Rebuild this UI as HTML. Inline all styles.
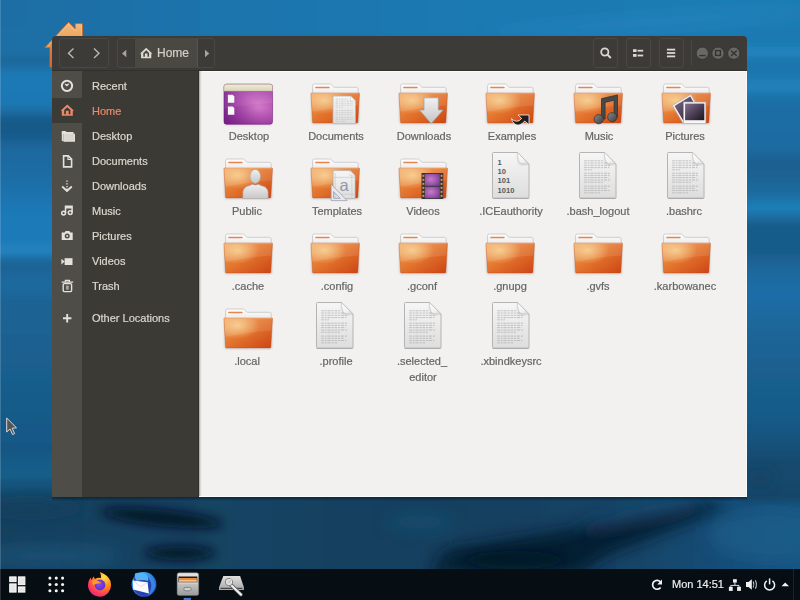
<!DOCTYPE html>
<html><head><meta charset="utf-8">
<style>
html,body{margin:0;padding:0;width:800px;height:600px;overflow:hidden;}
body{position:relative;font-family:"Liberation Sans",sans-serif;background:#1b6596;-webkit-font-smoothing:antialiased;}
.sl,.lbl,.tx{will-change:transform;-webkit-text-stroke:0.2px currentColor;}
.a{position:absolute;}
#bg{position:absolute;left:0;top:0;width:800px;height:570px;
background:linear-gradient(180deg,#1f7ab3 0px,#1e76ad 60px,#1b6a9c 130px,#1f7ab5 230px,#1c6797 320px,#175683 400px,#144a70 470px,#123f60 540px,#10395a 570px);}
#win{left:52px;top:36px;width:695px;height:461px;background:#3c3b37;border-radius:4px 4px 0 0;overflow:hidden;}
.sl{position:absolute;left:92px;font-size:11px;color:#dcd8cf;line-height:14px;white-space:nowrap;}
.lbl{position:absolute;width:100px;text-align:center;font-size:11px;color:#646464;line-height:14px;white-space:nowrap;}
.hb{position:absolute;border:1px solid #4a4843;border-radius:3px;box-sizing:border-box;}
svg{overflow:visible;}
</style></head><body>

<svg width="0" height="0" style="position:absolute">
<defs>
 <linearGradient id="gFront" x1="0" y1="0" x2="1" y2="1">
  <stop offset="0" stop-color="#f2a866"/>
  <stop offset="0.45" stop-color="#e4772f"/>
  <stop offset="1" stop-color="#cc4414"/>
 </linearGradient>
 <radialGradient id="gHi" cx="0.28" cy="0.25" r="0.45">
  <stop offset="0" stop-color="#f8d290" stop-opacity="0.85"/>
  <stop offset="1" stop-color="#f8d290" stop-opacity="0"/>
 </radialGradient>
 <linearGradient id="gPaper" x1="0" y1="0" x2="0" y2="1">
  <stop offset="0" stop-color="#ffffff"/>
  <stop offset="1" stop-color="#e2e2e2"/>
 </linearGradient>
 <linearGradient id="gDoc" x1="0" y1="0" x2="0" y2="1">
  <stop offset="0" stop-color="#f6f6f6"/>
  <stop offset="1" stop-color="#dddddd"/>
 </linearGradient>
 <linearGradient id="gArrow" x1="0" y1="0" x2="0" y2="1">
  <stop offset="0" stop-color="#f2f2f2"/>
  <stop offset="1" stop-color="#c4c4c4"/>
 </linearGradient>
 <linearGradient id="gNote" x1="0" y1="0" x2="1" y2="1">
  <stop offset="0" stop-color="#8a8a8a"/>
  <stop offset="1" stop-color="#3c3c3c"/>
 </linearGradient>
 <linearGradient id="gPhoto" x1="0" y1="0" x2="1" y2="1">
  <stop offset="0" stop-color="#85708f"/>
  <stop offset="0.5" stop-color="#4e4058"/>
  <stop offset="1" stop-color="#18161c"/>
 </linearGradient>
 <linearGradient id="gPerson" x1="0" y1="0" x2="0" y2="1">
  <stop offset="0" stop-color="#eeeeee"/>
  <stop offset="1" stop-color="#c8c8c8"/>
 </linearGradient>
 <radialGradient id="gFilm" cx="0.4" cy="0.45" r="0.7">
  <stop offset="0" stop-color="#c87cc8"/>
  <stop offset="1" stop-color="#7a3c98"/>
 </radialGradient>
 <radialGradient id="gPurple" cx="0.7" cy="0.58" r="0.75">
  <stop offset="0" stop-color="#d67cca"/>
  <stop offset="0.55" stop-color="#b04cb0"/>
  <stop offset="1" stop-color="#882c96"/>
 </radialGradient>
 <linearGradient id="gCream" x1="0" y1="0" x2="0" y2="1">
  <stop offset="0" stop-color="#f0ecd8"/>
  <stop offset="1" stop-color="#d8d4b8"/>
 </linearGradient>
 <linearGradient id="gCurl" x1="0" y1="0" x2="1" y2="1"><stop offset="0" stop-color="#ffffff"/><stop offset="0.6" stop-color="#f2f2f2"/><stop offset="1" stop-color="#d4d4d4"/></linearGradient>
 <linearGradient id="gPurpDark" x1="0" y1="1" x2="0.6" y2="0.3"><stop offset="0" stop-color="#5a1070" stop-opacity="0.45"/><stop offset="1" stop-color="#5a1070" stop-opacity="0"/></linearGradient>
 <filter id="fSh" x="-20%" y="-20%" width="140%" height="140%"><feGaussianBlur stdDeviation="0.8"/></filter>

 <g id="fold">
  <rect x="0.5" y="10" width="47.5" height="30" rx="2" fill="#000" opacity="0.18" filter="url(#fSh)"/>
  <path d="M1.6,14 V1.8 Q1.6,0 3.4,0 H19.5 L23.2,3.3 H45.4 Q47.2,3.3 47.2,5.1 V14 Z" fill="url(#gPaper)" stroke="#cdcdcd" stroke-width="1"/>
  <rect x="4.1" y="2.7" width="14.6" height="1.6" rx="0.8" fill="#e9844c"/>
  <path d="M0.4,9 H48.1 Q48.6,9 48.5,9.6 L46.8,38.3 Q46.8,38.9 46.2,38.9 H2.2 Q1.6,38.9 1.6,38.3 L-0.1,9.6 Q-0.1,9 0.4,9 Z" fill="url(#gFront)"/>
  <path d="M0.4,9 H48.1 Q48.6,9 48.5,9.6 L46.8,38.3 Q46.8,38.9 46.2,38.9 H2.2 Q1.6,38.9 1.6,38.3 L-0.1,9.6 Q-0.1,9 0.4,9 Z" fill="url(#gHi)"/>
  <path d="M0,9 H48.5 L47.7,21.5 Q24,23 0.8,28 Z" fill="#fff" opacity="0.10"/>
  <path d="M0.4,9 H48.1 Q48.6,9 48.5,9.6 L46.8,38.3 Q46.8,38.9 46.2,38.9 H2.2 Q1.6,38.9 1.6,38.3 L-0.1,9.6 Q-0.1,9 0.4,9 Z" fill="none" stroke="#c24a12" stroke-width="0.6" opacity="0.6"/>
  <path d="M0.6,9.6 H47.9" stroke="#f7b47c" stroke-width="0.8" opacity="0.7"/>
 </g>

 <g id="txtdoc">
  <path d="M0.5,1.5 Q0.5,0.5 1.5,0.5 H25.5 L37,12 V45.5 Q37,46.5 36,46.5 H1.5 Q0.5,46.5 0.5,45.5 Z" fill="url(#gDoc)" stroke="#b4b4b4" stroke-width="1"/>
  <path d="M25.5,0.5 Q25,10 27.5,12.5 Q30,14 37,12 Z" fill="#000" opacity="0.12" filter="url(#fSh)"/><path d="M25.5,0.5 Q25.8,9 27.8,10.8 Q30,12.4 37,12 Z" fill="url(#gCurl)" stroke="#c0c0c0" stroke-width="0.6"/>
  <path d="M1,46.2 H36.5" stroke="#a8a8a8" stroke-width="1"/>
 </g>
 <g id="txtlines" stroke="#b0b0b0" stroke-width="0.75" stroke-dasharray="2.6 0.9 1.8 0.9 3.2 0.9 2.2 0.9">
  <path d="M5.2,8.8 H25 M5.2,11 H29 M5.2,13.3 H31 M5.2,15.6 H30.5 M5.2,17.8 H13"/>
  <path d="M5.2,21.2 H31 M5.2,23.4 H30.5 M5.2,25.6 H29.5 M5.2,28 H31 M5.2,30.2 H24"/>
  <path d="M5.2,34.1 H31 M5.2,36.3 H27.5 M5.2,38.5 H30.5 M5.2,40.8 H21.5"/>
 </g>
</defs>
</svg>

<svg class="a" style="left:0;top:0" width="800" height="569" viewBox="0 0 800 569">
<defs>
<linearGradient id="gL" x1="0" y1="0" x2="0" y2="569" gradientUnits="userSpaceOnUse"><stop offset="0.0000" stop-color="#1e72a8"/><stop offset="0.0527" stop-color="#1e70a6"/><stop offset="0.0914" stop-color="#1e70a6"/><stop offset="0.1054" stop-color="#1b6699"/><stop offset="0.1318" stop-color="#1f7ab6"/><stop offset="0.1845" stop-color="#1f78b3"/><stop offset="0.2109" stop-color="#185a8a"/><stop offset="0.2355" stop-color="#185a8a"/><stop offset="0.2636" stop-color="#1c6aa0"/><stop offset="0.3163" stop-color="#1c6ea6"/><stop offset="0.3779" stop-color="#1f7ab8"/><stop offset="0.4218" stop-color="#1f7ab8"/><stop offset="0.4429" stop-color="#2284c0"/><stop offset="0.4605" stop-color="#1a6294"/><stop offset="0.5009" stop-color="#1c6aa0"/><stop offset="0.5272" stop-color="#1b6495"/><stop offset="0.6327" stop-color="#1a6090"/><stop offset="0.7381" stop-color="#185a88"/><stop offset="0.7909" stop-color="#175785"/><stop offset="0.8348" stop-color="#1a5f8a"/><stop offset="0.8787" stop-color="#134668"/><stop offset="0.9139" stop-color="#154b70"/><stop offset="0.9578" stop-color="#175580"/><stop offset="1.0000" stop-color="#185a85"/></linearGradient>
<linearGradient id="gR" x1="0" y1="0" x2="0" y2="569" gradientUnits="userSpaceOnUse"><stop offset="0.0000" stop-color="#1f7ab2"/><stop offset="0.0527" stop-color="#1f7ab3"/><stop offset="0.0808" stop-color="#1f7ab3"/><stop offset="0.0914" stop-color="#2588c4"/><stop offset="0.1019" stop-color="#1f78b0"/><stop offset="0.1230" stop-color="#1d74ab"/><stop offset="0.1547" stop-color="#2282bd"/><stop offset="0.1757" stop-color="#1c6ea6"/><stop offset="0.2583" stop-color="#1c6ca2"/><stop offset="0.2847" stop-color="#1a5f90"/><stop offset="0.3128" stop-color="#1b6495"/><stop offset="0.3374" stop-color="#1c6a9c"/><stop offset="0.3656" stop-color="#2080bb"/><stop offset="0.3954" stop-color="#195c8a"/><stop offset="0.4394" stop-color="#195c8a"/><stop offset="0.4833" stop-color="#1c6aa0"/><stop offset="0.5185" stop-color="#1d6ea8"/><stop offset="0.5800" stop-color="#1b6699"/><stop offset="0.6503" stop-color="#1a6090"/><stop offset="0.7381" stop-color="#185a88"/><stop offset="0.8172" stop-color="#15496e"/><stop offset="0.8787" stop-color="#14466a"/><stop offset="0.9578" stop-color="#175a88"/><stop offset="1.0000" stop-color="#175680"/></linearGradient>
<linearGradient id="gTop" x1="0" y1="0" x2="1" y2="0"><stop offset="0" stop-color="#1c6ca2"/><stop offset="0.3" stop-color="#1e74ac"/><stop offset="0.6" stop-color="#1f7ab3"/><stop offset="1" stop-color="#1f7cb5"/></linearGradient>
<linearGradient id="gBot" x1="0" y1="0" x2="1" y2="0"><stop offset="0" stop-color="#123f5e"/><stop offset="0.3" stop-color="#134464"/><stop offset="0.55" stop-color="#123f5e"/><stop offset="0.75" stop-color="#134466"/><stop offset="0.9" stop-color="#165280"/><stop offset="1" stop-color="#185a88"/></linearGradient>
<filter id="bb5" x="-10%" y="-10%" width="120%" height="120%"><feGaussianBlur stdDeviation="3"/></filter><filter id="bb6" x="-50%" y="-50%" width="200%" height="200%"><feGaussianBlur stdDeviation="6"/></filter>
<filter id="bb8" x="-50%" y="-50%" width="200%" height="200%"><feGaussianBlur stdDeviation="8"/></filter>
</defs>
<g filter="url(#bb5)">
<rect x="-60" y="-60" width="920" height="700" fill="url(#gBot)"/>
<rect x="-60" y="-60" width="920" height="100" fill="url(#gTop)"/>
<rect x="-60" y="28" width="118" height="475" fill="url(#gL)"/>
<rect x="741" y="28" width="120" height="475" fill="url(#gR)"/>
</g>
<g filter="url(#bb8)">
<ellipse cx="650" cy="22" rx="160" ry="6" fill="#2a8cc6" opacity="0.5" transform="rotate(-4 650 22)"/>
<ellipse cx="30" cy="508" rx="55" ry="12" fill="#113e5e" opacity="0.7"/>
<ellipse cx="50" cy="556" rx="70" ry="10" fill="#1a5a82" opacity="0.6"/>
<ellipse cx="770" cy="535" rx="60" ry="25" fill="#1a5f8c" opacity="0.6"/>
<ellipse cx="420" cy="522" rx="35" ry="7" fill="#1a5a80" opacity="0.5"/>
<ellipse cx="640" cy="520" rx="70" ry="9" fill="#1c6294" opacity="0.55" transform="rotate(-12 640 520)"/>
<path d="M430,575 L445,550 Q530,536 610,522 L705,503 L732,506 Q665,532 605,556 L580,575 Z" fill="#06182a" opacity="0.85"/>
</g>
<g filter="url(#bb6)">
<ellipse cx="162" cy="518" rx="62" ry="8" fill="#04121c" opacity="0.9" transform="rotate(6 162 518)"/>
<ellipse cx="180" cy="553" rx="36" ry="7" fill="#04121c" opacity="0.9"/>
<ellipse cx="515" cy="560" rx="50" ry="9" fill="#04121c" opacity="0.6"/>
<ellipse cx="760" cy="478" rx="12" ry="8" fill="#123f60" opacity="0.6"/>
</g>
</svg>
<div class="a" style="left:0;top:0;width:1px;height:569px;background:rgba(190,215,235,0.22)"></div>

<svg class="a" style="left:0;top:0" width="100" height="80" viewBox="0 0 100 80">
<defs><linearGradient id="gHouse" x1="0" y1="0" x2="0" y2="1"><stop offset="0" stop-color="#f2bc7c"/><stop offset="0.4" stop-color="#e9a05a"/><stop offset="1" stop-color="#d8602a"/></linearGradient></defs><path d="M45,47.5 L68.6,22.3 L75.2,28.9 V23.8 H82.4 V40 H52 V67 H50 V47.5 Z" fill="url(#gHouse)" stroke="#d46a2a" stroke-width="0.9"/><path d="M47.5,46.6 L68.6,24 L75.8,31 M76.2,24.8 H81.5 V38" fill="none" stroke="#f8d4a4" stroke-width="0.7" opacity="0.7"/>
</svg>
<svg class="a" style="left:0;top:0" width="30" height="440" viewBox="0 0 30 440">
<path d="M6.7,418 V432 L10,429 L12.6,434.6 L14.6,433.6 L12.2,428.2 L16.5,427.8 Z" fill="#555" stroke="#d8d8d8" stroke-width="1" stroke-linejoin="round"/>
</svg>
<div id="win" class="a"></div>
<div class="a" style="left:52px;top:70px;width:695px;height:1px;background:#31302c"></div>
<div class="a" style="left:52px;top:71px;width:147px;height:426px;background:#3c3a35"></div>
<div class="a" style="left:52px;top:71px;width:30px;height:426px;background:#4e4d47"></div>
<div class="a" style="left:52px;top:98px;width:30px;height:25px;background:#3c3a35"></div>
<div class="a" style="left:199px;top:71px;width:548px;height:426px;background:#f2f1f0"></div>
<div class="a" style="left:199px;top:71px;width:548px;height:1px;background:#fafaf9"></div>
<div class="a" style="left:198px;top:71px;width:1px;height:426px;background:#302f2b"></div>
<div class="a" style="left:199px;top:71px;width:3px;height:426px;background:linear-gradient(90deg,#a2a1a0,#e4e3e2 60%,#f2f1f0)"></div>
<div class="a" style="left:199px;top:496px;width:548px;height:1px;background:#fcfcfb"></div>
<div class="a" style="left:746px;top:71px;width:1px;height:426px;background:#f9f9f8"></div>
<div class="a" style="left:52px;top:497px;width:695px;height:4px;background:linear-gradient(180deg,rgba(2,8,14,0.45),rgba(2,8,14,0))"></div>

<div class="hb" style="left:59px;top:38px;width:50px;height:30px"></div>
<div class="hb" style="left:117px;top:38px;width:98px;height:30px"></div>
<div class="a" style="left:134px;top:39px;width:64px;height:28px;background:#4a4843;border-left:1px solid #3a3934;border-right:1px solid #55534d;box-sizing:border-box"></div>
<div class="hb" style="left:593px;top:38px;width:25px;height:30px"></div>
<div class="hb" style="left:626px;top:38px;width:25px;height:30px"></div>
<div class="hb" style="left:659px;top:38px;width:25px;height:30px"></div>
<div class="a" style="left:691px;top:40px;width:1px;height:26px;background:#4a4843"></div>
<div class="a tx" style="left:157px;top:46px;font-size:12px;line-height:14px;color:#d4d0c8">Home</div>
<svg class="a" style="left:0;top:0" width="800" height="80" viewBox="0 0 800 80">
<g fill="none" stroke="#bcb8b0" stroke-width="1.4">
<path d="M73.5,48.5 L68.5,53.3 L73.5,58.1"/>
<path d="M94,48.5 L99,53.3 L94,58.1"/>
</g>
<path d="M126.3,49.8 L122,53.5 L126.3,57.3 Z" fill="#a8a49c"/>
<path d="M205,49.8 L209.3,53.5 L205,57.3 Z" fill="#a8a49c"/>
<g transform="translate(139.4,47.3) scale(0.93)"><path d="M0.8,6.6 L7.3,0.6 L13.8,6.6 L12.8,7 V11.8 H1.8 V7 Z M4.2,10.2 V6.1 L7.3,3.3 L10.4,6.1 V10.2 H8.7 V6.8 H5.9 V10.2 Z" fill-rule="evenodd" fill="#dcd8cf"/></g>
<g fill="none" stroke="#dcd8cf"><circle cx="604.8" cy="52" r="3.6" stroke-width="1.8"/><path d="M607.4,54.6 L610.8,58" stroke-width="2"/></g>
<g fill="#dcd8cf"><rect x="633" y="49.2" width="3.6" height="2.8"/><rect x="637.6" y="49.8" width="5.6" height="1.8"/><rect x="633" y="54" width="3.6" height="2.8"/><rect x="637.6" y="54.6" width="5.6" height="1.8"/>
<rect x="666.9" y="48.7" width="8.3" height="1.8"/><rect x="666.9" y="52.1" width="8.3" height="1.8"/><rect x="666.9" y="55.5" width="8.3" height="1.8"/></g>
<g fill="#6a6864" stroke="#33322e" stroke-width="0.8"><circle cx="702.3" cy="53.2" r="6.1"/><circle cx="718" cy="53.2" r="6.1"/><circle cx="733.8" cy="53.2" r="6.1"/></g>
<rect x="699.3" y="54.9" width="6.3" height="1.4" fill="#33322e"/>
<rect x="715.6" y="50.6" width="4.8" height="4.8" fill="none" stroke="#33322e" stroke-width="1.4"/>
<path d="M731,50.6 L736.8,55.9 M736.8,50.6 L731,55.9" stroke="#33322e" stroke-width="1.3"/>
</svg>
<div class="sl" style="top:78.5px;color:#dcd8cf">Recent</div>
<svg class="a" style="left:60px;top:79px" width="16" height="16" viewBox="0 0 16 16"><circle cx="7" cy="6.85" r="5.15" fill="none" stroke="#e4e1da" stroke-width="2"/><path d="M5.1,4.9 L6.9,6.5 L8.6,4.8" fill="none" stroke="#e4e1da" stroke-width="1.3"/></svg>
<div class="sl" style="top:103.5px;color:#e9896a">Home</div>
<svg class="a" style="left:60px;top:104px" width="16" height="16" viewBox="0 0 16 16"><path d="M0.8,6.6 L7.3,0.6 L13.8,6.6 L12.8,7 V11.8 H1.8 V7 Z M4.2,10.2 V6.1 L7.3,3.3 L10.4,6.1 V10.2 H8.7 V6.8 H5.9 V10.2 Z" fill-rule="evenodd" fill="#e9896a"/></svg>
<div class="sl" style="top:128.5px;color:#dcd8cf">Desktop</div>
<svg class="a" style="left:60.6px;top:129px" width="16" height="16" viewBox="0 0 16 16"><path d="M0.8,2 H4.5 L5.5,3 H12.5 V5 H0.8 Z" fill="#e4e1da"/><rect x="0.8" y="3" width="1.6" height="9" fill="#e4e1da"/><rect x="2.9" y="5.2" width="10.6" height="7" fill="#d9d6cf" stroke="#e4e1da" stroke-width="1"/></svg>
<div class="sl" style="top:153.5px;color:#dcd8cf">Documents</div>
<svg class="a" style="left:61.8px;top:155.2px" width="16" height="16" viewBox="0 0 16 16"><path d="M1.6,0.9 H6.3 L9.6,4.2 V11.9 H1.6 Z" fill="none" stroke="#e4e1da" stroke-width="1.6" stroke-linejoin="miter"/><path d="M6,1 V4.5 H9.5" fill="none" stroke="#e4e1da" stroke-width="1.2"/></svg>
<div class="sl" style="top:178.5px;color:#dcd8cf">Downloads</div>
<svg class="a" style="left:60px;top:180px" width="16" height="16" viewBox="0 0 16 16"><path d="M7,0.5 V1.8 M7,3.2 V4.5 M7,5.9 V7.2 M7,8.6 V10.8" stroke="#e4e1da" stroke-width="1.4"/><path d="M2.2,6.5 L7,11 L11.8,6.5" fill="none" stroke="#e4e1da" stroke-width="1.8"/></svg>
<div class="sl" style="top:203.5px;color:#dcd8cf">Music</div>
<svg class="a" style="left:60.5px;top:204.8px" width="16" height="16" viewBox="0 0 16 16"><circle cx="2.6" cy="8.1" r="1.9" fill="none" stroke="#e4e1da" stroke-width="1.5"/><circle cx="9.2" cy="7.6" r="1.9" fill="none" stroke="#e4e1da" stroke-width="1.5"/><path d="M4.5,8.1 V1.3 H11.1 V7.6 M4.5,2.8 H11.1" fill="none" stroke="#e4e1da" stroke-width="1.5"/></svg>
<div class="sl" style="top:228.5px;color:#dcd8cf">Pictures</div>
<svg class="a" style="left:61px;top:230px" width="16" height="16" viewBox="0 0 16 16"><path d="M0.7,2.5 H3.6 L4.6,0.9 H8.4 L9.4,2.5 H11.7 V9.9 H0.7 Z" fill="#e4e1da"/><circle cx="6.2" cy="5.9" r="2.5" fill="#4f4d46"/><circle cx="6.2" cy="5.9" r="1" fill="#e4e1da"/></svg>
<div class="sl" style="top:253.5px;color:#dcd8cf">Videos</div>
<svg class="a" style="left:61.4px;top:258.1px" width="16" height="16" viewBox="0 0 16 16"><path d="M0.4,0.8 L3.6,3.6 L0.4,6.4 Z" fill="#e4e1da"/><rect x="3.6" y="0.2" width="7.9" height="6.8" fill="#e4e1da"/></svg>
<div class="sl" style="top:278.5px;color:#dcd8cf">Trash</div>
<svg class="a" style="left:60.5px;top:279px" width="16" height="16" viewBox="0 0 16 16"><path d="M0.6,3.2 H12.2 M4.4,3 V1.3 H8.4 V3" fill="none" stroke="#e4e1da" stroke-width="1.3"/><rect x="2.2" y="4.6" width="8.4" height="8" rx="1" fill="none" stroke="#e4e1da" stroke-width="1.4"/><rect x="5" y="6.6" width="2.8" height="4" fill="#a8a49c"/></svg>
<div class="sl" style="top:310.5px;color:#dcd8cf">Other Locations</div>
<svg class="a" style="left:62.6px;top:313.8px" width="16" height="16" viewBox="0 0 16 16"><path d="M4.2,0 V8.5 M0,4.25 H8.4" stroke="#e4e1da" stroke-width="1.9"/></svg>
<svg class="a" style="left:223.5px;top:84px" width="50" height="44" viewBox="0 0 50 44">
<rect x="0.5" y="2" width="47.5" height="39" rx="2" fill="#000" opacity="0.15" filter="url(#fSh)"/>
<rect x="0" y="0.2" width="48.5" height="40" rx="2.5" fill="url(#gPurple)" stroke="#7a2486" stroke-width="0.6"/>
<path d="M2.5,0.2 H46 Q48.5,0.2 48.5,2.7 V7.2 H0 V2.7 Q0,0.2 2.5,0.2 Z" fill="url(#gCream)" stroke="#aca88c" stroke-width="0.5"/>
<path d="M0.3,7.4 H48.5 V19 Q24,20 0.3,25 Z" fill="#fff" opacity="0.08"/><rect x="0" y="7.2" width="48.5" height="33" rx="2" fill="url(#gPurpDark)"/><path d="M0.3,7.4 H48.2" stroke="#6a5a50" stroke-width="0.6" opacity="0.6"/>
<path d="M3.9,10.8 H8.6 L10.3,12.5 V18.8 H3.9 Z" fill="#f8f8f8"/>
<path d="M3.9,22.4 H8.6 L10.3,24.1 V30.8 H3.9 Z" fill="#f8f8f8"/>
</svg>
<div class="lbl" style="left:198.7px;top:128.5px">Desktop</div>
<svg class="a" style="left:311.1px;top:84px" width="50" height="44" viewBox="0 0 50 44"><use href="#fold"/><path d="M22,12 H39.5 L44.5,17 V39.7 H22 Z" fill="url(#gDoc)" stroke="#b4b4b4" stroke-width="0.8"/>
<path d="M39.5,12 V17 H44.5 Z" fill="#fff" stroke="#c8c8c8" stroke-width="0.6"/>
<g stroke="#bcbcbc" stroke-width="0.55" stroke-dasharray="2.5 0.8 1.5 0.8"><path d="M24.5,15.2 H37 M24.5,17.2 H41.5 M24.5,19.2 H42 M24.5,21.2 H42 M24.5,23.2 H32 M24.5,26.4 H42 M24.5,28.4 H42 M24.5,30.4 H41 M24.5,33.4 H42 M24.5,35.4 H42 M24.5,37.4 H36"/></g></svg>
<div class="lbl" style="left:285.9px;top:128.5px">Documents</div>
<svg class="a" style="left:398.7px;top:84px" width="50" height="44" viewBox="0 0 50 44"><use href="#fold"/><path d="M25,13.8 H39.3 V26 H44.1 L32.2,39.6 L20.5,26 H25 Z" fill="url(#gArrow)" stroke="#a4a4a4" stroke-width="0.8"/></svg>
<div class="lbl" style="left:373.5px;top:128.5px">Downloads</div>
<svg class="a" style="left:486.3px;top:84px" width="50" height="44" viewBox="0 0 50 44"><use href="#fold"/><path d="M25.4,34.6 Q27.5,41.8 33,41 Q36.2,40.4 38.6,37.1 L43,40.6 V31 H32 L35.7,34.4 Q33.5,37.2 30.8,37.3 Q27.8,37.2 25.4,34.6 Z" fill="#1e1e1e" stroke="#f8f8f8" stroke-width="0.8" stroke-linejoin="round"/></svg>
<div class="lbl" style="left:461.5px;top:128.5px">Examples</div>
<svg class="a" style="left:573.9px;top:84px" width="50" height="44" viewBox="0 0 50 44"><use href="#fold"/><path d="M27.5,14.6 L43.5,11 V33 H40.1 V16.2 L31.1,18.4 V35 H27.5 Z" fill="#484848" stroke="#2e2e2e" stroke-width="0.7" stroke-linejoin="round"/>
<circle cx="24.7" cy="35.2" r="4.6" fill="url(#gNote)" stroke="#2e2e2e" stroke-width="0.7"/>
<circle cx="38.3" cy="33.2" r="4.6" fill="url(#gNote)" stroke="#2e2e2e" stroke-width="0.7"/></svg>
<div class="lbl" style="left:548.7px;top:128.5px">Music</div>
<svg class="a" style="left:661.5px;top:84px" width="50" height="44" viewBox="0 0 50 44"><use href="#fold"/><polygon points="28.7,10.4 10.3,21.4 21.3,39.8 39.7,28.8" fill="#f4f4f4" stroke="#a8a8a8" stroke-width="0.6"/>
<polygon points="28.2,12.6 12.6,21.9 21.8,37.6 37.4,28.3" fill="url(#gPhoto)"/>
<rect x="21.5" y="18" width="22.4" height="21.6" fill="#f6f6f6" stroke="#a8a8a8" stroke-width="0.6"/>
<rect x="23.1" y="19.6" width="19.2" height="16.6" fill="url(#gPhoto)"/></svg>
<div class="lbl" style="left:635.0px;top:128.5px">Pictures</div>
<svg class="a" style="left:223.5px;top:159px" width="50" height="44" viewBox="0 0 50 44"><use href="#fold"/><path d="M18.9,39.6 V33 Q19.5,28 25,26.8 L28.5,25.2 Q31.3,27 34.1,25.2 L37.6,26.8 Q43.5,28 44.1,33 V39.6 Z" fill="url(#gPerson)" stroke="#a8a8a8" stroke-width="0.6"/>
<ellipse cx="31.3" cy="17.4" rx="5.2" ry="7" fill="url(#gPerson)" stroke="#a8a8a8" stroke-width="0.6"/></svg>
<div class="lbl" style="left:196.8px;top:203.5px">Public</div>
<svg class="a" style="left:311.1px;top:159px" width="50" height="44" viewBox="0 0 50 44"><use href="#fold"/><path d="M22.1,11.6 H39 L44.1,16.7 V39.6 H22.1 Z" fill="url(#gDoc)" stroke="#b0b0b0" stroke-width="0.7"/>
<path d="M39,11.6 V16.7 H44.1 Z" fill="#fff" stroke="#c0c0c0" stroke-width="0.5"/>
<path d="M22.5,18.4 H43.5 M22.5,35.2 H43.5 M24.1,14 V39 M40.9,14 V39" stroke="#c0c4cc" stroke-width="0.6"/>
<text x="33.2" y="32" font-size="16.5" text-anchor="middle" fill="#9098a8" font-family="Liberation Sans">a</text>
<path d="M20.1,25.2 V41.6 H36.1 Z M22.6,32.6 V39.3 H29.3 Z" fill="#e8e8ee" fill-rule="evenodd" stroke="#9098a8" stroke-width="0.7" stroke-linejoin="round"/></svg>
<div class="lbl" style="left:286.7px;top:203.5px">Templates</div>
<svg class="a" style="left:398.7px;top:159px" width="50" height="44" viewBox="0 0 50 44"><use href="#fold"/><rect x="22.5" y="14" width="21.8" height="26" fill="#383838"/>
<rect x="26" y="15" width="14.8" height="11.8" fill="url(#gFilm)"/>
<rect x="26" y="27.8" width="14.8" height="11.4" fill="url(#gFilm)"/>
<g fill="#f08848"><rect x="23.4" y="15.9" width="1.9" height="1.9"/><rect x="41.6" y="15.9" width="1.9" height="1.9"/><rect x="23.4" y="19.9" width="1.9" height="1.9"/><rect x="41.6" y="19.9" width="1.9" height="1.9"/><rect x="23.4" y="23.9" width="1.9" height="1.9"/><rect x="41.6" y="23.9" width="1.9" height="1.9"/><rect x="23.4" y="27.9" width="1.9" height="1.9"/><rect x="41.6" y="27.9" width="1.9" height="1.9"/><rect x="23.4" y="31.9" width="1.9" height="1.9"/><rect x="41.6" y="31.9" width="1.9" height="1.9"/><rect x="23.4" y="35.9" width="1.9" height="1.9"/><rect x="41.6" y="35.9" width="1.9" height="1.9"/></g></svg>
<div class="lbl" style="left:373.3px;top:203.5px">Videos</div>
<svg class="a" style="left:491.5px;top:152px" width="40" height="48" viewBox="0 0 40 48"><use href="#txtdoc"/><g font-family="Liberation Sans" font-weight="bold" font-size="7.6" fill="#5a5a5a"><text x="5.6" y="12.6">1</text><text x="5.6" y="21.8">10</text><text x="5.6" y="31.2">101</text><text x="5.6" y="40.8">1010</text></g></svg>
<div class="lbl" style="left:461.3px;top:203.5px">.ICEauthority</div>
<svg class="a" style="left:579.1px;top:152px" width="40" height="48" viewBox="0 0 40 48"><use href="#txtdoc"/><use href="#txtlines"/></svg>
<div class="lbl" style="left:548.4px;top:203.5px">.bash_logout</div>
<svg class="a" style="left:666.7px;top:152px" width="40" height="48" viewBox="0 0 40 48"><use href="#txtdoc"/><use href="#txtlines"/></svg>
<div class="lbl" style="left:634.2px;top:203.5px">.bashrc</div>
<svg class="a" style="left:223.5px;top:234px" width="50" height="44" viewBox="0 0 50 44"><use href="#fold"/></svg>
<div class="lbl" style="left:198.0px;top:278.5px">.cache</div>
<svg class="a" style="left:311.1px;top:234px" width="50" height="44" viewBox="0 0 50 44"><use href="#fold"/></svg>
<div class="lbl" style="left:286.5px;top:278.5px">.config</div>
<svg class="a" style="left:398.7px;top:234px" width="50" height="44" viewBox="0 0 50 44"><use href="#fold"/></svg>
<div class="lbl" style="left:371.8px;top:278.5px">.gconf</div>
<svg class="a" style="left:486.3px;top:234px" width="50" height="44" viewBox="0 0 50 44"><use href="#fold"/></svg>
<div class="lbl" style="left:460.4px;top:278.5px">.gnupg</div>
<svg class="a" style="left:573.9px;top:234px" width="50" height="44" viewBox="0 0 50 44"><use href="#fold"/></svg>
<div class="lbl" style="left:548.1px;top:278.5px">.gvfs</div>
<svg class="a" style="left:661.5px;top:234px" width="50" height="44" viewBox="0 0 50 44"><use href="#fold"/></svg>
<div class="lbl" style="left:634.6px;top:278.5px">.karbowanec</div>
<svg class="a" style="left:223.5px;top:309px" width="50" height="44" viewBox="0 0 50 44"><use href="#fold"/></svg>
<div class="lbl" style="left:197.0px;top:353.5px">.local</div>
<svg class="a" style="left:316.3px;top:302px" width="40" height="48" viewBox="0 0 40 48"><use href="#txtdoc"/><use href="#txtlines"/></svg>
<div class="lbl" style="left:285.6px;top:353.5px">.profile</div>
<svg class="a" style="left:403.9px;top:302px" width="40" height="48" viewBox="0 0 40 48"><use href="#txtdoc"/><use href="#txtlines"/></svg>
<div class="lbl" style="left:372.4px;top:353.5px">.selected_</div>
<div class="lbl" style="left:372.6px;top:369.5px">editor</div>
<svg class="a" style="left:491.5px;top:302px" width="40" height="48" viewBox="0 0 40 48"><use href="#txtdoc"/><use href="#txtlines"/></svg>
<div class="lbl" style="left:461.3px;top:353.5px">.xbindkeysrc</div>
<div class="a" style="left:0;top:569px;width:800px;height:31px;background:#060d13"></div>
<div class="a" style="left:793px;top:569px;width:1px;height:31px;background:#1c232b"></div><div class="a" style="left:0;top:569px;width:1px;height:31px;background:#2a3036"></div>
<div class="a tx" style="left:672px;top:577px;font-size:11px;line-height:14px;color:#ececec">Mon 14:51</div>
<svg class="a" style="left:0;top:570px" width="800" height="30" viewBox="0 570 800 30">
<g fill="#e6e6e6" stroke="#fafafa" stroke-width="1">
<rect x="9.7" y="576.9" width="6.4" height="4.7" /><rect x="9.7" y="583.9" width="6.4" height="8.2"/>
<rect x="18.4" y="576.9" width="6.5" height="7.7"/><rect x="18.4" y="586.9" width="6.5" height="5.2"/>
</g>
<g fill="#f4f4f4"><circle cx="49.90" cy="578.10" r="1.55"/><circle cx="49.90" cy="584.45" r="1.55"/><circle cx="49.90" cy="590.80" r="1.55"/><circle cx="56.25" cy="578.10" r="1.55"/><circle cx="56.25" cy="584.45" r="1.55"/><circle cx="56.25" cy="590.80" r="1.55"/><circle cx="62.60" cy="578.10" r="1.55"/><circle cx="62.60" cy="584.45" r="1.55"/><circle cx="62.60" cy="590.80" r="1.55"/></g>
<defs>
<radialGradient id="gFF" cx="0.7" cy="0.2" r="0.9"><stop offset="0" stop-color="#ffe14a"/><stop offset="0.45" stop-color="#ff8a1a"/><stop offset="0.8" stop-color="#ff3a5a"/><stop offset="1" stop-color="#e0208a"/></radialGradient>
<radialGradient id="gFFg" cx="0.4" cy="0.4" r="0.7"><stop offset="0" stop-color="#8a4ae8"/><stop offset="1" stop-color="#5a2ad0"/></radialGradient>
<linearGradient id="gTB" x1="0.2" y1="0" x2="0.8" y2="1"><stop offset="0" stop-color="#48b0f8"/><stop offset="0.5" stop-color="#2a78e0"/><stop offset="1" stop-color="#1a3ab8"/></linearGradient>
<linearGradient id="gCab" x1="0" y1="0" x2="0" y2="1"><stop offset="0" stop-color="#e8e8e8"/><stop offset="1" stop-color="#9a9a9a"/></linearGradient>
<linearGradient id="gDisk" x1="0" y1="0" x2="0" y2="1"><stop offset="0" stop-color="#e0e0e0"/><stop offset="1" stop-color="#a8a8a8"/></linearGradient>
</defs>
<path d="M100,572 Q108,575 110.5,581 Q113,590 105,595.5 Q98,598.5 92,594 Q86.5,589 88.5,581.5 L90.5,577.5 L91.5,580 L93.5,576.5 L95,579 Q98,577 101,578 Q101,574.5 100,572 Z" fill="url(#gFF)"/>
<circle cx="100" cy="585" r="5.4" fill="url(#gFFg)"/>
<path d="M91.5,581 Q95,579.5 99,581.5 L101.5,583 Q96,583.5 93,585 Z" fill="#ff9a2a"/>
<circle cx="144" cy="584.4" r="12.4" fill="url(#gTB)"/>
<path d="M134,577 Q140,574 147,577 Q153,581 152,589 Q149,595 141,595 Q135,593 133,588 Z" fill="#2a3aa8" opacity="0.85"/>
<path d="M146,574 Q154,577 155.5,585 Q155,592 148,596 Q152,589 151,583 Q149,577 146,574 Z" fill="#3a8ee8" opacity="0.8"/>
<path d="M135,573.5 Q141,571.5 146,574 Q149,577 148,581 Q142,579 137,581 Q134,578 135,573.5 Z" fill="#50b4f8"/>
<circle cx="138.4" cy="579.3" r="0.9" fill="#e08a30"/>
<path d="M132.8,580.5 L147.6,582.3 L148.9,593.6 L133.2,589.4 Z" fill="#fbfbfd"/>
<path d="M133.5,581 L140.5,586.5 L147.2,582.6" fill="none" stroke="#c8c8d8" stroke-width="0.6"/>
<rect x="177.1" y="572.8" width="21.6" height="22.7" rx="2" fill="url(#gCab)" stroke="#707070" stroke-width="0.5"/>
<rect x="178.5" y="576.5" width="18.8" height="5.8" fill="#2a1a10"/>
<rect x="179" y="578" width="17.8" height="4.2" fill="#e88a3a"/>
<rect x="179" y="580.2" width="17.8" height="1" fill="#ffd0a0"/>
<rect x="178.3" y="582.6" width="19.2" height="0.8" fill="#ffffff" opacity="0.5"/>
<rect x="183.8" y="587.4" width="7.4" height="3.4" rx="1.7" fill="#cfcfcf" stroke="#6a6a6a" stroke-width="0.7"/>
<rect x="183.7" y="597.9" width="7.2" height="2.1" fill="#3d7ed8"/>
<path d="M223.3,576 H240.1 L243.9,587.2 V590 H219 V587.2 Z" fill="url(#gDisk)"/>
<path d="M220.5,588.3 H242.5" stroke="#202020" stroke-width="0.9"/>
<path d="M230.5,584.5 L241,594.6" stroke="#4a4a4a" stroke-width="3.8" stroke-linecap="round"/>
<path d="M230.5,584.5 L241,594.6" stroke="#ececec" stroke-width="2.4" stroke-linecap="round"/>
<circle cx="229" cy="582" r="3.7" fill="#e6e6e6" stroke="#5a5a5a" stroke-width="0.7"/>
<path d="M229,582.3 L230.6,577.6 L233.4,579.8 Z" fill="#c8c8c8"/>
<circle cx="229" cy="582" r="1.5" fill="#c8c8c8"/>
<g fill="none" stroke="#f2f2f2" stroke-width="1.7"><path d="M660.4,582 A4.4,4.4 0 1 0 660.6,587.4"/></g>
<path d="M662,579.6 V584.4 H657.2 Z" fill="#f2f2f2"/>
<g fill="#f2f2f2"><rect x="733" y="579.2" width="3.8" height="3.4"/><rect x="728.9" y="586.8" width="3.8" height="4.1"/><rect x="737.1" y="586.8" width="3.8" height="4.1"/></g>
<path d="M734.9,582.5 V585.4 M730.8,586.9 V585.4 H739 V586.9" fill="none" stroke="#f2f2f2" stroke-width="0.9"/>
<path d="M746,582 H748.5 L751.8,579.3 V589.7 L748.5,587 H746 Z" fill="#f0f0f0"/>
<path d="M753.2,581.5 Q754.6,584.5 753.2,587.5 M755.3,580.3 Q757.6,584.5 755.3,588.7" fill="none" stroke="#c8c8c8" stroke-width="1.1"/>
<path d="M766.8,580.8 A5,5 0 1 0 772.4,580.8" fill="none" stroke="#f2f2f2" stroke-width="1.5"/>
<path d="M769.6,578.4 V584.4" stroke="#f2f2f2" stroke-width="1.5"/>
<path d="M781.5,586.3 L785.2,582.4 L789,586.3 Z" fill="#f2f2f2"/>
</svg>
</body></html>
